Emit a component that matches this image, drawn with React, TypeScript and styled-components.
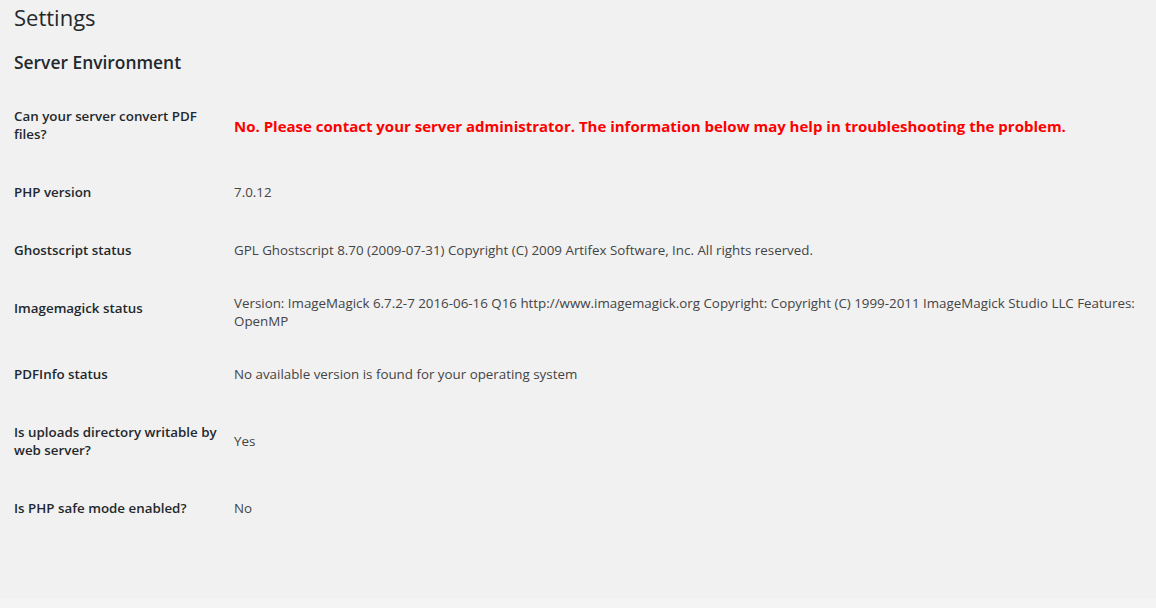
import React from 'react'
import styled, { createGlobalStyle } from 'styled-components'

const GlobalStyle = createGlobalStyle`
  html, body { margin: 0; padding: 0; background: #f1f1f1; }
  body {
    font-family: "Open Sans", "Noto Sans", sans-serif;
    font-size: 13.35px;
    color: #444;
  }
`

type Row = {
  label: string
  value: string
  error?: boolean
}

const rows: Row[] = [
  {
    label: 'Can your server convert PDF files?',
    value:
      'No. Please contact your server administrator. The information below may help in troubleshooting the problem.',
    error: true,
  },
  { label: 'PHP version', value: '7.0.12' },
  {
    label: 'Ghostscript status',
    value:
      'GPL Ghostscript 8.70 (2009-07-31) Copyright (C) 2009 Artifex Software, Inc. All rights reserved.',
  },
  {
    label: 'Imagemagick status',
    value:
      'Version: ImageMagick 6.7.2-7 2016-06-16 Q16 http://www.imagemagick.org Copyright: Copyright (C) 1999-2011 ImageMagick Studio LLC Features: OpenMP',
  },
  { label: 'PDFInfo status', value: 'No available version is found for your operating system' },
  { label: 'Is uploads directory writable by web server?', value: 'Yes' },
  { label: 'Is PHP safe mode enabled?', value: 'No' },
]

function App() {
  return (
    <StyledPage>
      <GlobalStyle />
      <StyledWrap>
        <h1 className="page-title">Settings</h1>
        <h2 className="section-title">Server Environment</h2>
        <StyledFormTable>
          <tbody>
            {rows.map((_row) => (
              <tr key={_row.label}>
                <th scope="row">{_row.label}</th>
                <td>
                  {_row.error ? <ErrorText>{_row.value}</ErrorText> : _row.value}
                </td>
              </tr>
            ))}
          </tbody>
        </StyledFormTable>
      </StyledWrap>
      <StyledFooter />
    </StyledPage>
  )
}

export default App

const StyledPage = styled.div`
  display: flex;
  flex-direction: column;
  height: 100vh;
`

const StyledWrap = styled.div`
  flex: 1;
  padding: 0 0 0 14px;

  > .page-title {
    margin: 0;
    padding: 3px 0 5px;
    font-size: 22px;
    font-weight: 400;
    line-height: 29px;
    color: #23282d;
  }

  > .section-title {
    margin: 14px 0 14px;
    font-size: 17.4px;
    font-weight: 600;
    line-height: 22px;
    color: #23282d;
  }
`

const StyledFormTable = styled.table`
  width: 100%;
  border-collapse: collapse;
  border-spacing: 0;

  th {
    width: 206px;
    padding: 20px 4px 20px 0;
    text-align: left;
    vertical-align: top;
    font-weight: 600;
    line-height: 18px;
    color: #23282d;
  }

  td {
    padding: 15px 10px;
    vertical-align: middle;
    line-height: 18px;
    color: #444;
  }
`

const ErrorText = styled.span`
  display: inline-block;
  padding-top: 2px;
  font-size: 15px;
  font-weight: 700;
  color: #ff0000;
`

const StyledFooter = styled.div`
  height: 9px;
  background: #f4f4f4;
`
